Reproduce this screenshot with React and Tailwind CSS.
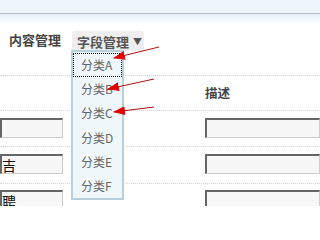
import React from "react";

const cjk = { fontFamily: '"Noto Sans CJK SC", "Liberation Sans", sans-serif' };

const items = ["分类A", "分类B", "分类C", "分类D", "分类E", "分类F"];

function Field({ text, cut }) {
  return (
    <div
      className={
        "h-[20px] border-t-2 border-l-2 border-b border-r border-t-[#666] border-l-[#666] border-b-[#ccc] border-r-[#ccc] bg-[#f7f7f7] text-[14px] leading-[18px] text-[#111] overflow-hidden " +
        (cut ? "border-l-0" : "")
      }
    >
      {text}
    </div>
  );
}

function Row({ left, h, top }) {
  return (
    <div className={"flex border-b border-dotted border-[#c8d8e0] " + h}>
      <div className={"w-[63px] " + top}>
        <Field text={left} cut />
      </div>
      <div className={"ml-[142px] flex-1 " + top}>
        <Field text="" />
      </div>
    </div>
  );
}

export default function App() {
  return (
    <div className="relative w-full h-[206px] overflow-hidden bg-white" style={cjk}>
      {/* top band */}
      <div className="h-[14px] bg-[#eef6fb] border-b border-[#b4c4cc]" />
      <div className="h-[10px] bg-gradient-to-b from-[#e4eff7] to-white" />

      {/* nav */}
      <div className="h-[52px] pl-[9px] pt-[6px] border-b border-dotted border-[#c8d8e0]">
        <div className="flex items-end">
          <span className="text-[13px] font-bold text-[#444] leading-[20px] pb-[1px] mr-[11px]">内容管理</span>
          <div className="h-[20px] w-[72px] bg-[#eeeeee] rounded-t-[3px] flex items-center pl-[5px] text-[13px] font-bold text-[#555] leading-none">
            字段管理
            <span className="ml-[4px] text-[9px]">▼</span>
          </div>
        </div>
      </div>

      {/* table */}
      <div className="flex h-[35px] items-center border-b border-dotted border-[#c8d8e0]">
        <span className="ml-[205px] text-[12.5px] font-bold text-[#444]">描述</span>
      </div>
      <Row left="" h="h-[36px]" top="pt-[7px]" />
      <Row left="吉" h="h-[37px]" top="pt-[7px]" />
      <Row left="聘" h="h-[30px]" top="pt-[6px]" />

      {/* dropdown */}
      <div className="absolute left-[71px] top-[50px] w-[53px] h-[150px] bg-[#f0f7fb] border-2 border-[#b7d1dc] flex flex-col pt-[1px]">
        {items.map((t, i) => (
          <div
            key={t}
            className={
              "h-[24.5px] flex items-center pl-[7px] text-[12px] text-[#666] " +
              (i === 0 ? "border border-dotted border-black" : "border border-transparent")
            }
          >
            {t}
          </div>
        ))}
      </div>

      {/* arrows */}
      <svg className="absolute left-0 top-0" width="297" height="206">
        <defs>
          <marker id="ah" markerWidth="12" markerHeight="9" refX="11" refY="4.5" orient="auto" markerUnits="userSpaceOnUse">
            <path d="M0 0 L12 4.5 L0 9 Z" fill="#e00000" />
          </marker>
        </defs>
        <line x1="159" y1="47" x2="114" y2="58" stroke="#b01010" strokeWidth="1" markerEnd="url(#ah)" />
        <line x1="154" y1="79" x2="108" y2="89" stroke="#b01010" strokeWidth="1" markerEnd="url(#ah)" />
        <line x1="154" y1="107" x2="114" y2="112" stroke="#b01010" strokeWidth="1" markerEnd="url(#ah)" />
      </svg>
    </div>
  );
}
